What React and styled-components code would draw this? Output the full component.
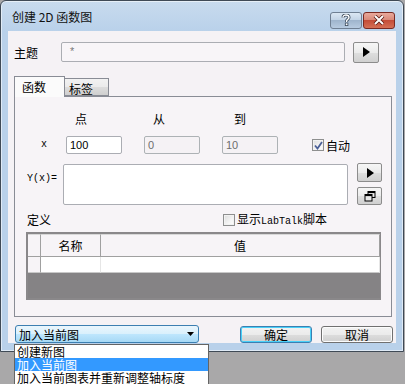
import React from 'react';
import styled, { createGlobalStyle } from 'styled-components';

const GlobalStyle = createGlobalStyle`
  html, body {
    margin: 0;
    padding: 0;
    background: #a9a8a9;
  }
  body {
    font-family: "Noto Sans CJK SC", "Liberation Sans", sans-serif;
    font-size: 12px;
    color: #000;
  }
`;

const cjk = `"Noto Sans CJK SC", "Liberation Sans", sans-serif`;
const mono = `"Liberation Mono", "Noto Sans CJK SC", monospace`;

const Page = styled.div`
  position: relative;
  width: 405px;
  height: 384px;
  overflow: hidden;
  background: #a9a8a9;
`;

const Window = styled.div`
  width: 402px;
  height: 350px;
  border: 1px solid #3f4a56;
  border-radius: 6px 6px 0 0;
  background: linear-gradient(180deg, #c8dbee 0px, #b9d1ea 30px, #b9d1ea 100%);
  display: flex;
  flex-direction: column;
  box-shadow: inset 0 0 0 1px rgba(255, 255, 255, 0.55);
`;

const TitleBar = styled.div`
  height: 30px;
  display: flex;
  align-items: center;
  justify-content: space-between;
  padding: 0 8px 0 11px;
`;

const TitleText = styled.div`
  font-family: ${cjk};
  font-size: 12px;
  line-height: 12px;
  margin-top: 2px;
  color: #111;
`;

const CaptionButtons = styled.div`
  display: flex;
  gap: 1px;
  margin-top: 8px;
`;

const CaptionButton = styled.div`
  width: 32px;
  height: 17px;
  border: 1px solid ${p => (p.$close ? '#7a2a22' : '#6f7f92')};
  border-radius: 3px;
  box-sizing: border-box;
  display: flex;
  align-items: center;
  justify-content: center;
  background: ${p =>
    p.$close
      ? 'linear-gradient(180deg, #e9a99c 0%, #d98a7a 45%, #c44d38 50%, #d56f55 100%)'
      : 'linear-gradient(180deg, #dbe7f3 0%, #c3d4e6 45%, #9fb5cd 50%, #b7cbe0 100%)'};
`;

const Client = styled.div`
  margin: 0 7px;
  height: 312px;
  background: #f5f2f5;
  display: flex;
  flex-direction: column;
  box-sizing: border-box;
  position: relative;
`;

const TopRow = styled.div`
  display: flex;
  align-items: center;
  height: 22px;
  margin-top: 10px;
  padding-left: 6px;
`;

const Label = styled.div`
  font-family: ${cjk};
  font-size: 12px;
  line-height: 13px;
  width: ${p => p.$w || 'auto'};
  padding-left: ${p => p.$pl || '0'};
  box-sizing: border-box;
  flex-shrink: 0;
`;

const TextField = styled.div`
  width: ${p => p.$w};
  height: ${p => p.$h || '18px'};
  box-sizing: border-box;
  border: 1px solid ${p => (p.$disabled ? '#adb2b5' : '#abadb3')};
  border-radius: 2px;
  background: ${p => p.$bg || '#fff'};
  font-family: "Liberation Sans", sans-serif;
  font-size: 11px;
  line-height: 14px;
  padding: 1px 3px;
  color: ${p => (p.$disabled ? '#6d6d6d' : p.$muted ? '#7a7a7a' : '#000')};
  flex-shrink: 0;
`;

const Star = styled.span`
  padding-left: 5px;
`;

const SquareButton = styled.div`
  width: ${p => p.$w || '26px'};
  height: ${p => p.$h || '21px'};
  box-sizing: border-box;
  margin-left: ${p => p.$ml || '0'};
  border: 1px solid #8c8c8c;
  border-radius: 2px;
  background: linear-gradient(180deg, #f6f6f6 0%, #ebebeb 50%, #dedede 51%, #d0d0d0 100%);
  display: flex;
  align-items: center;
  justify-content: center;
  flex-shrink: 0;
`;

const Tabs = styled.div`
  display: flex;
  align-items: flex-end;
  margin-top: 13px;
  margin-left: 6px;
  height: 20px;
  position: relative;
  z-index: 1;
`;

const Tab = styled.div`
  width: ${p => p.$w};
  height: ${p => (p.$active ? '21px' : '18px')};
  box-sizing: border-box;
  border: 1px solid #898c95;
  border-bottom: ${p => (p.$active ? 'none' : '1px solid #898c95')};
  border-left: ${p => (p.$active ? '1px solid #898c95' : 'none')};
  background: ${p =>
    p.$active
      ? '#fbfbfb'
      : 'linear-gradient(180deg, #f2f2f2 0%, #ebebeb 50%, #dddddd 51%, #cfcfcf 100%)'};
  font-family: ${cjk};
  font-size: 12px;
  line-height: 13px;
  padding: ${p => (p.$active ? '3px 0 0 7px' : '3px 0 0 4px')};
  margin-bottom: ${p => (p.$active ? '-1px' : '0')};
`;

const Panel = styled.div`
  margin-left: 6px;
  width: 378px;
  height: 221px;
  box-sizing: border-box;
  border: 1px solid #898c95;
  background: #f7f4f7;
  padding-top: 15px;
  display: flex;
  flex-direction: column;
`;

const FieldRow = styled.div`
  display: flex;
  align-items: center;
  gap: 22px;
  height: ${p => p.$h || '18px'};
  margin-top: ${p => p.$mt || '0'};
`;

const HeadCell = styled.div`
  width: ${p => p.$w || '56px'};
  padding-left: ${p => p.$pl || '9px'};
  box-sizing: border-box;
  font-family: ${cjk};
  font-size: 12px;
  line-height: 13px;
  flex-shrink: 0;
`;

const VarLabel = styled.div`
  font-family: ${mono};
  font-size: 10px;
  line-height: 12px;
  width: ${p => p.$w};
  padding-left: ${p => p.$pl};
  box-sizing: border-box;
  flex-shrink: 0;
  margin-top: ${p => p.$mt || '0'};
`;

const CheckWrap = styled.div`
  display: flex;
  align-items: center;
  gap: 2px;
  margin-left: ${p => p.$ml || '0'};
  font-family: ${cjk};
  font-size: 12px;
  line-height: 13px;
`;

const Box = styled.div`
  width: 12px;
  height: 12px;
  box-sizing: border-box;
  border: 1px solid #8e8f8f;
  background: linear-gradient(135deg, #dcdcdc 0%, #f4f4f4 60%, #ffffff 100%);
  box-shadow: inset 0 0 0 1px #f2f2f2;
  display: flex;
  align-items: center;
  justify-content: center;
`;

const Latin = styled.span`
  font-family: ${mono};
  font-size: 10px;
`;

const ExprRow = styled.div`
  display: flex;
  align-items: flex-start;
  margin-top: 10px;
`;

const SideButtons = styled.div`
  display: flex;
  flex-direction: column;
  gap: 5px;
  margin-left: 9px;
  margin-top: -1px;
`;

const DefRow = styled.div`
  display: flex;
  align-items: center;
  height: 13px;
  margin-top: 8px;
`;

const Table = styled.div`
  margin: 6px 0 0 11px;
  width: 355px;
  height: 68px;
  box-sizing: border-box;
  border: 2px solid #8a888a;
  border-right-width: 1px;
  background: #858385;
  display: grid;
  grid-template-columns: 13px 60px 1fr;
  grid-template-rows: 23px 16px;
  align-content: start;
`;

const Cell = styled.div`
  box-sizing: border-box;
  background: ${p => (p.$white ? '#fff' : '#f7f4f7')};
  border-right: 1px solid ${p => (p.$light ? '#e6e6e6' : '#a0a0a0')};
  border-bottom: 1px solid ${p => (p.$header ? '#a0a0a0' : '#c8c8c8')};
  border-top: ${p => (p.$header ? '1px solid #d8d8d8' : 'none')};
  font-family: ${cjk};
  font-size: 12px;
  line-height: 13px;
  display: flex;
  align-items: center;
  justify-content: center;
`;

const BottomRow = styled.div`
  display: flex;
  align-items: flex-end;
  margin-top: 8px;
  padding-left: 7px;
  height: 18px;
`;

const Combo = styled.div`
  width: 184px;
  height: 18px;
  box-sizing: border-box;
  border: 1px solid #3c7fb1;
  border-radius: 3px;
  background: linear-gradient(180deg, #eaf6fd 0%, #d9f0fc 50%, #bee6fd 51%, #a7d9f5 100%);
  display: flex;
  align-items: center;
  justify-content: space-between;
  padding: 0 4px 0 3px;
  font-family: ${cjk};
  font-size: 12px;
  line-height: 13px;
`;

const PushButton = styled.div`
  width: 72px;
  height: 17px;
  box-sizing: border-box;
  margin-left: ${p => p.$ml};
  border: 1px solid ${p => (p.$default ? '#3c7fb1' : '#707070')};
  border-radius: 3px;
  box-shadow: ${p => (p.$default ? 'inset 0 0 0 1px #48d0f8' : 'inset 0 0 0 1px #fcfcfc')};
  background: linear-gradient(180deg, #f2f2f2 0%, #ebebeb 50%, #dddddd 51%, #cfcfcf 100%);
  display: flex;
  align-items: center;
  justify-content: center;
  font-family: ${cjk};
  font-size: 12px;
  line-height: 13px;
`;

const DropList = styled.div`
  position: absolute;
  left: 14px;
  top: 344px;
  width: 195px;
  box-sizing: border-box;
  border: 1px solid #646464;
  border-bottom: none;
  background: #fff;
`;

const DropItem = styled.div`
  height: 13px;
  padding-left: 2px;
  font-family: ${cjk};
  font-size: 12px;
  line-height: 13px;
  background: ${p => (p.$selected ? '#3399ff' : 'transparent')};
  color: ${p => (p.$selected ? '#fff' : '#000')};
  white-space: nowrap;
`;

const Play = () => (
  <svg width="8" height="10" viewBox="0 0 8 10">
    <path d="M1 0 L8 5 L1 10 Z" fill="#000" />
  </svg>
);

const App = () => (
  <Page>
    <GlobalStyle />
    <Window>
      <TitleBar>
        <TitleText>创建 2D 函数图</TitleText>
        <CaptionButtons>
          <CaptionButton>
            <svg width="10" height="12" viewBox="0 0 10 12">
              <path
                d="M2 3.5 C2 1.5 3.5 1 5 1 C6.8 1 8 2 8 3.5 C8 5 6 5.3 5.6 6.8 L5.6 8"
                stroke="#3b4a5c"
                strokeWidth="3"
                fill="none"
              />
              <path
                d="M2 3.5 C2 1.5 3.5 1 5 1 C6.8 1 8 2 8 3.5 C8 5 6 5.3 5.6 6.8 L5.6 8"
                stroke="#fff"
                strokeWidth="1.4"
                fill="none"
              />
              <rect x="4.3" y="9" width="2.6" height="2.6" fill="#fff" stroke="#3b4a5c" strokeWidth="0.8" />
            </svg>
          </CaptionButton>
          <CaptionButton $close>
            <svg width="14" height="10" viewBox="0 0 14 10">
              <path d="M3 1 L11 9 M11 1 L3 9" stroke="#5a1a12" strokeWidth="3.6" />
              <path d="M3 1 L11 9 M11 1 L3 9" stroke="#fff" strokeWidth="2" />
            </svg>
          </CaptionButton>
        </CaptionButtons>
      </TitleBar>

      <Client>
        <TopRow>
          <Label $w="47px">主题</Label>
          <TextField $w="284px" $h="20px" $bg="#f8f5f8" $muted>
            <Star>*</Star>
          </TextField>
          <SquareButton $ml="8px">
            <Play />
          </SquareButton>
        </TopRow>

        <Tabs>
          <Tab $w="51px" $active>函数</Tab>
          <Tab $w="44px">标签</Tab>
        </Tabs>

        <Panel>
          <FieldRow $h="13px">
            <HeadCell $w="29px" />
            <HeadCell>点</HeadCell>
            <HeadCell>从</HeadCell>
            <HeadCell $pl="12px">到</HeadCell>
          </FieldRow>

          <FieldRow $mt="11px">
            <VarLabel $w="29px" $pl="26px">x</VarLabel>
            <TextField $w="56px">100</TextField>
            <TextField $w="56px" $disabled $bg="#f5f2f5">0</TextField>
            <TextField $w="56px" $disabled $bg="#f5f2f5">10</TextField>
            <CheckWrap $ml="12px">
              <Box>
                <svg width="9" height="9" viewBox="0 0 9 9">
                  <path d="M1 4.5 L3.5 7.5 L8 1" stroke="#4a5f97" strokeWidth="1.8" fill="none" />
                </svg>
              </Box>
              自动
            </CheckWrap>
          </FieldRow>

          <ExprRow>
            <VarLabel $w="48px" $pl="12px" $mt="9px">Y(x)=</VarLabel>
            <TextField $w="285px" $h="41px" />
            <SideButtons>
              <SquareButton $w="25px" $h="19px">
                <Play />
              </SquareButton>
              <SquareButton $w="25px" $h="18px">
                <svg width="12" height="11" viewBox="0 0 12 11">
                  <rect x="4" y="0.5" width="7" height="6" fill="none" stroke="#000" />
                  <rect x="4" y="0.5" width="7" height="1.6" fill="#000" />
                  <rect x="1" y="3.5" width="7" height="6.5" fill="#e8e8e8" stroke="#000" />
                  <rect x="1" y="3.5" width="7" height="1.6" fill="#000" />
                </svg>
              </SquareButton>
            </SideButtons>
          </ExprRow>

          <DefRow>
            <Label $w="208px" $pl="12px">定义</Label>
            <CheckWrap>
              <Box />
              <span>
                显示<Latin>LabTalk</Latin>脚本
              </span>
            </CheckWrap>
          </DefRow>

          <Table>
            <Cell $header />
            <Cell $header>名称</Cell>
            <Cell $header>值</Cell>
            <Cell />
            <Cell $white $light />
            <Cell $white $light />
          </Table>
        </Panel>

        <BottomRow>
          <Combo>
            <span>加入当前图</span>
            <svg width="7" height="4" viewBox="0 0 7 4">
              <path d="M0 0 L7 0 L3.5 4 Z" fill="#000" />
            </svg>
          </Combo>
          <PushButton $default $ml="41px">确定</PushButton>
          <PushButton $ml="9px">取消</PushButton>
        </BottomRow>
      </Client>
    </Window>

    <DropList>
      <DropItem>创建新图</DropItem>
      <DropItem $selected>加入当前图</DropItem>
      <DropItem>加入当前图表并重新调整轴标度</DropItem>
    </DropList>
  </Page>
);

export default App;
